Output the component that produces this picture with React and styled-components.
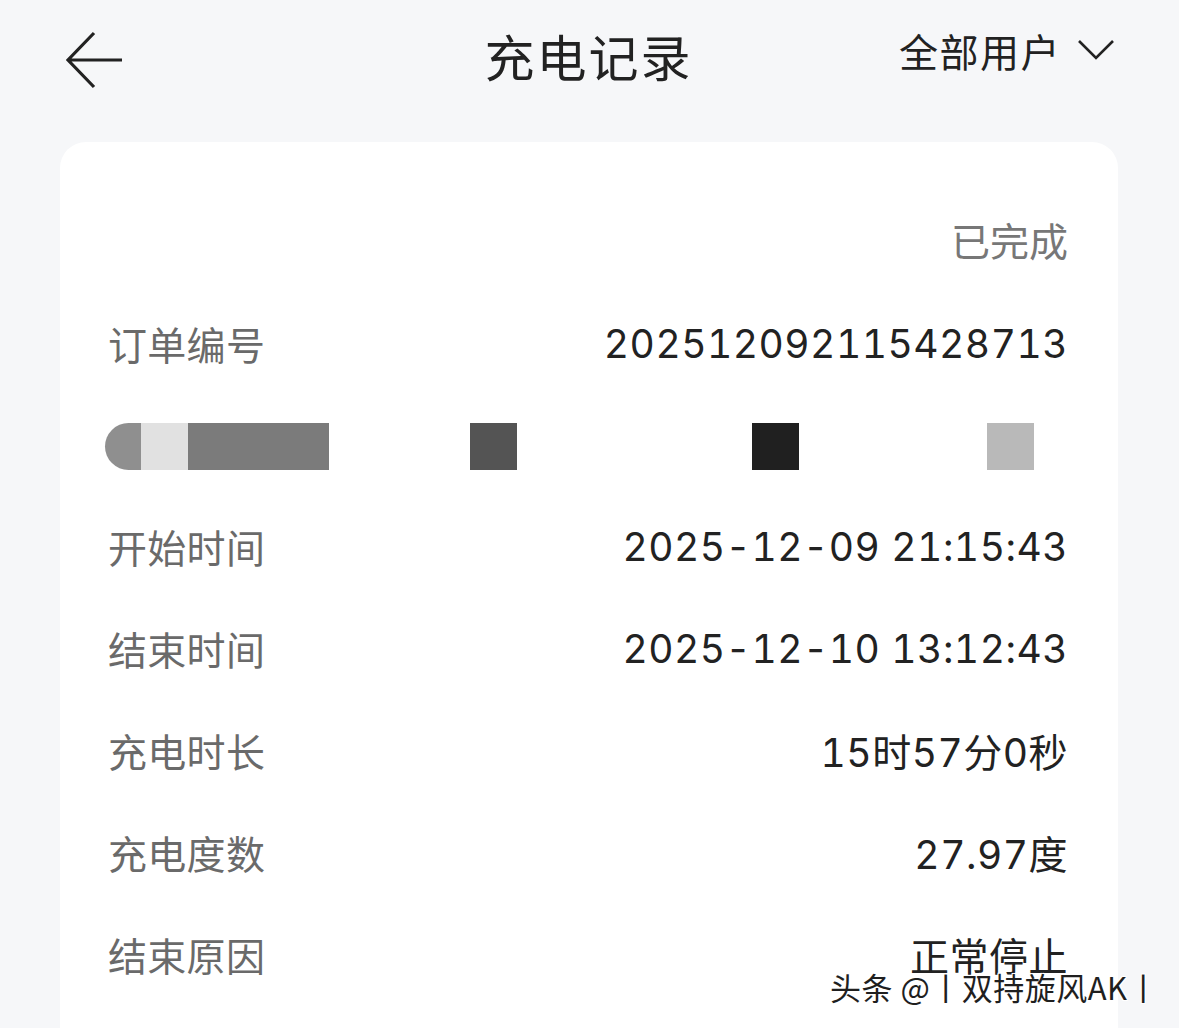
import styled, { createGlobalStyle } from 'styled-components'

const GlobalStyle = createGlobalStyle`
  html, body {
    margin: 0;
    padding: 0;
    background: #f6f7f9;
    height: 1028px;
    overflow: hidden;
  }
  body {
    font-family: Inter, 'Noto Sans CJK SC', sans-serif;
  }
`

const rows = [
  { label: '开始时间', value: '2025-12-09 21:15:43' },
  { label: '结束时间', value: '2025-12-10 13:12:43' },
  { label: '充电时长', value: '15时57分0秒' },
  { label: '充电度数', value: '27.97度' },
  { label: '结束原因', value: '正常停止' },
]

export default function App() {
  return (
    <Page>
      <GlobalStyle />
      <Header>
        <BackButton aria-label="返回">
          <svg width="60" height="60" viewBox="0 0 60 60" fill="none">
            <path d="M58 30H4M30 3L4 30L30 57" stroke="#222" strokeWidth="3.2" strokeLinejoin="miter" />
          </svg>
        </BackButton>
        <Title>充电记录</Title>
        <UserFilter>
          全部用户
          <svg width="38" height="24" viewBox="0 0 38 24" fill="none">
            <path d="M2 3L19 20L36 3" stroke="#222" strokeWidth="2.6" />
          </svg>
        </UserFilter>
      </Header>

      <Card>
        <Status>已完成</Status>
        <Row>
          <Label>订单编号</Label>
          <Value>202512092115428713</Value>
        </Row>
        <Mosaic>
          <Block $w={36} $c="#8f8f8f" $round />
          <Block $w={47} $c="#e1e1e1" />
          <Block $w={141} $c="#7b7b7b" />
          <Block $w={47} $c="#545454" $gap={141} />
          <Block $w={47} $c="#202020" $gap={235} />
          <Block $w={47} $c="#b9b9b9" $gap={188} />
        </Mosaic>
        {rows.map((r) => (
          <Row key={r.label}>
            <Label>{r.label}</Label>
            <Value>{r.value}</Value>
          </Row>
        ))}
      </Card>

      <Watermark>头条 @丨双持旋风AK丨</Watermark>
    </Page>
  )
}

const Page = styled.div`
  position: relative;
  width: 1179px;
  height: 1028px;
  overflow: hidden;
  background: #f6f7f9;
`

const Header = styled.header`
  display: grid;
  grid-template-columns: 1fr auto 1fr;
  align-items: center;
  height: 120px;
  padding: 0 64px 0 64px;
`

const BackButton = styled.div`
  display: flex;
  align-items: center;
  height: 60px;
`

const Title = styled.h1`
  margin: 0 0 10px;
  font-size: 50px;
  font-weight: 400;
  color: #222;
  letter-spacing: 2px;
  transform: translateX(-1px);
`

const UserFilter = styled.div`
  justify-self: end;
  display: flex;
  align-items: center;
  gap: 16px;
  font-size: 39px;
  letter-spacing: 1.5px;
  color: #222;
  margin-top: -20px;
`

const Card = styled.section`
  margin: 22px 61px 0 60px;
  background: #fff;
  border-radius: 26px;
  padding: 70px 50px 0 48px;
  height: 900px;
  display: flex;
  flex-direction: column;
`

const Status = styled.div`
  align-self: flex-end;
  font-size: 39px;
  line-height: 60px;
  color: #777;
  margin-bottom: 41px;
`

const Row = styled.div`
  display: flex;
  justify-content: space-between;
  align-items: center;
  height: 60px;
  margin-bottom: 42px;
`

const Label = styled.span`
  font-size: 39px;
  color: #6a6a6a;
  letter-spacing: 0.3px;
`

const Value = styled.span`
  font-size: 39px;
  color: #222;
  font-variant-numeric: tabular-nums;
  letter-spacing: 0.5px;
  white-space: pre;
`

const Mosaic = styled.div`
  display: flex;
  height: 47px;
  margin: 8px 0 46px -3px;
`

const Block = styled.div`
  width: ${(p) => p.$w}px;
  margin-left: ${(p) => p.$gap || 0}px;
  background: ${(p) => p.$c};
  border-radius: ${(p) => (p.$round ? '24px 0 0 24px / 24px 0 0 24px' : '0')};
`

const Watermark = styled.div`
  position: absolute;
  left: 830px;
  top: 964px;
  font-family: 'Noto Sans CJK SC', sans-serif;
  font-size: 31px;
  letter-spacing: 0.5px;
  color: #1f1f1f;
  text-shadow: 1px 1px 0 #fff, -1px -1px 0 #fff, 1px -1px 0 #fff, -1px 1px 0 #fff;
`
